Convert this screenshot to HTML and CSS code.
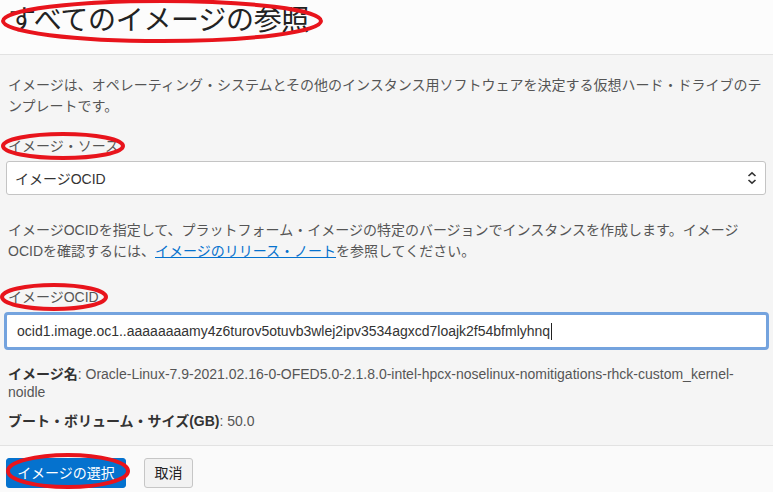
FILE: index.html
```html
<!DOCTYPE html>
<html lang="ja">
<head>
<meta charset="utf-8">
<title>すべてのイメージの参照</title>
<link rel="stylesheet" href="styles.css">
</head>
<body>
<div class="page">
  <header class="header">
    <h1 class="title">すべてのイメージの参照</h1>
  </header>
  <main class="main">
    <p class="desc">イメージは、オペレーティング・システムとその他のインスタンス用ソフトウェアを決定する仮想ハード・ドライブのテンプレートです。</p>
    <label class="label">イメージ・ソース</label>
    <div class="select">
      <span>イメージOCID</span>
      <svg class="chev" width="10" height="14" viewBox="0 0 10 14"><path d="M1.5 5 L5 1.8 L8.5 5 M1.5 9 L5 12.2 L8.5 9" fill="none" stroke="#333" stroke-width="1.6"/></svg>
    </div>
    <p class="desc desc2">イメージOCIDを指定して、プラットフォーム・イメージの特定のバージョンでインスタンスを作成します。イメージOCIDを確認するには、<a class="link" href="#">イメージのリリース・ノート</a>を参照してください。</p>
    <label class="label">イメージOCID</label>
    <div class="input"><span>ocid1.image.oc1..aaaaaaaamy4z6turov5otuvb3wlej2ipv3534agxcd7loajk2f54bfmlyhnq</span><span class="caret"></span></div>
    <p class="info"><b>イメージ名</b>: Oracle-Linux-7.9-2021.02.16-0-OFED5.0-2.1.8.0-intel-hpcx-noselinux-nomitigations-rhck-custom_kernel-noidle</p>
    <p class="info info2"><b>ブート・ボリューム・サイズ(GB)</b>: 50.0</p>
  </main>
  <footer class="footer">
    <button class="btn primary">イメージの選択</button>
    <button class="btn secondary">取消</button>
  </footer>
  <svg class="marks" width="773" height="492" viewBox="0 0 773 492">
    <g fill="none" stroke="#e8141c" stroke-width="4">
      <ellipse cx="162" cy="21" rx="159" ry="20"/>
      <ellipse cx="63" cy="146" rx="60" ry="12"/>
      <ellipse cx="54" cy="297" rx="52" ry="12"/>
      <ellipse cx="68" cy="471" rx="60" ry="16"/>
    </g>
  </svg>
</div>
</body>
</html>
```

FILE: styles.css
```css
* { box-sizing: border-box; }
html, body { margin: 0; padding: 0; }
body {
  font-family: "Liberation Sans", "Noto Sans CJK JP", sans-serif;
  font-size: 14px;
  color: #555;
  background: #f5f5f5;
}
.page {
  position: relative;
  width: 773px;
  height: 492px;
  overflow: hidden;
  display: flex;
  flex-direction: column;
}
.header {
  height: 55px;
  background: #fcfcfc;
  border-bottom: 1px solid #e2e2e2;
  padding: 1px 8px 0;
}
.title {
  margin: 0;
  font-size: 28px;
  font-weight: normal;
  line-height: 40px;
  color: #222;
  letter-spacing: -0.3px;
}
.main {
  flex: 1;
  background: #f5f5f5;
  padding: 20px 8px 0;
  display: flex;
  flex-direction: column;
}
.desc {
  margin: 0 0 19px;
  line-height: 21px;
}
.desc2 { margin-top: 25px; margin-bottom: 25px; }
.label {
  display: block;
  line-height: 21px;
  color: #555;
  margin-bottom: 4px;
}
.select {
  height: 34px;
  margin: 0 -1px 0 -2px;
  background: #fff;
  border: 1px solid #c4c4c4;
  border-radius: 3px;
  display: flex;
  align-items: center;
  justify-content: space-between;
  padding: 0 8px 0 8px;
  color: #333;
}
.chev { display: block; }
.link {
  color: #0572ce;
  text-decoration: underline;
}
.input {
  height: 38px;
  margin: 0 -4px 0 -4px;
  background: #fff;
  border: 3px solid #74a3de;
  border-radius: 4px;
  display: flex;
  align-items: center;
  padding: 0 10px;
  color: #333;
}
.caret {
  display: inline-block;
  width: 1px;
  height: 17px;
  background: #222;
  margin-left: 1px;
}
.info {
  margin: 15px 0 0;
  line-height: 18px;
}
.info b { color: #333; }
.info2 { margin-top: 11px; }
.footer {
  height: 47px;
  background: #fafafa;
  border-top: 1px solid #e2e2e2;
  padding: 12px 6px 0;
  display: flex;
  align-items: flex-start;
  gap: 18px;
}
.btn {
  font-family: "Liberation Sans", "Noto Sans CJK JP", sans-serif;
  font-size: 14px;
  height: 30px;
  border-radius: 3px;
  padding: 0;
  line-height: 28px;
  white-space: nowrap;
  text-align: center;
}
.primary {
  width: 120px;
  background: #0572ce;
  color: #fff;
  border: 1px solid #0572ce;
}
.secondary {
  width: 49px;
  background: #f2f2f2;
  color: #222;
  border: 1px solid #c6c6c6;
}
.marks {
  position: absolute;
  left: 0;
  top: 0;
  pointer-events: none;
}
```
